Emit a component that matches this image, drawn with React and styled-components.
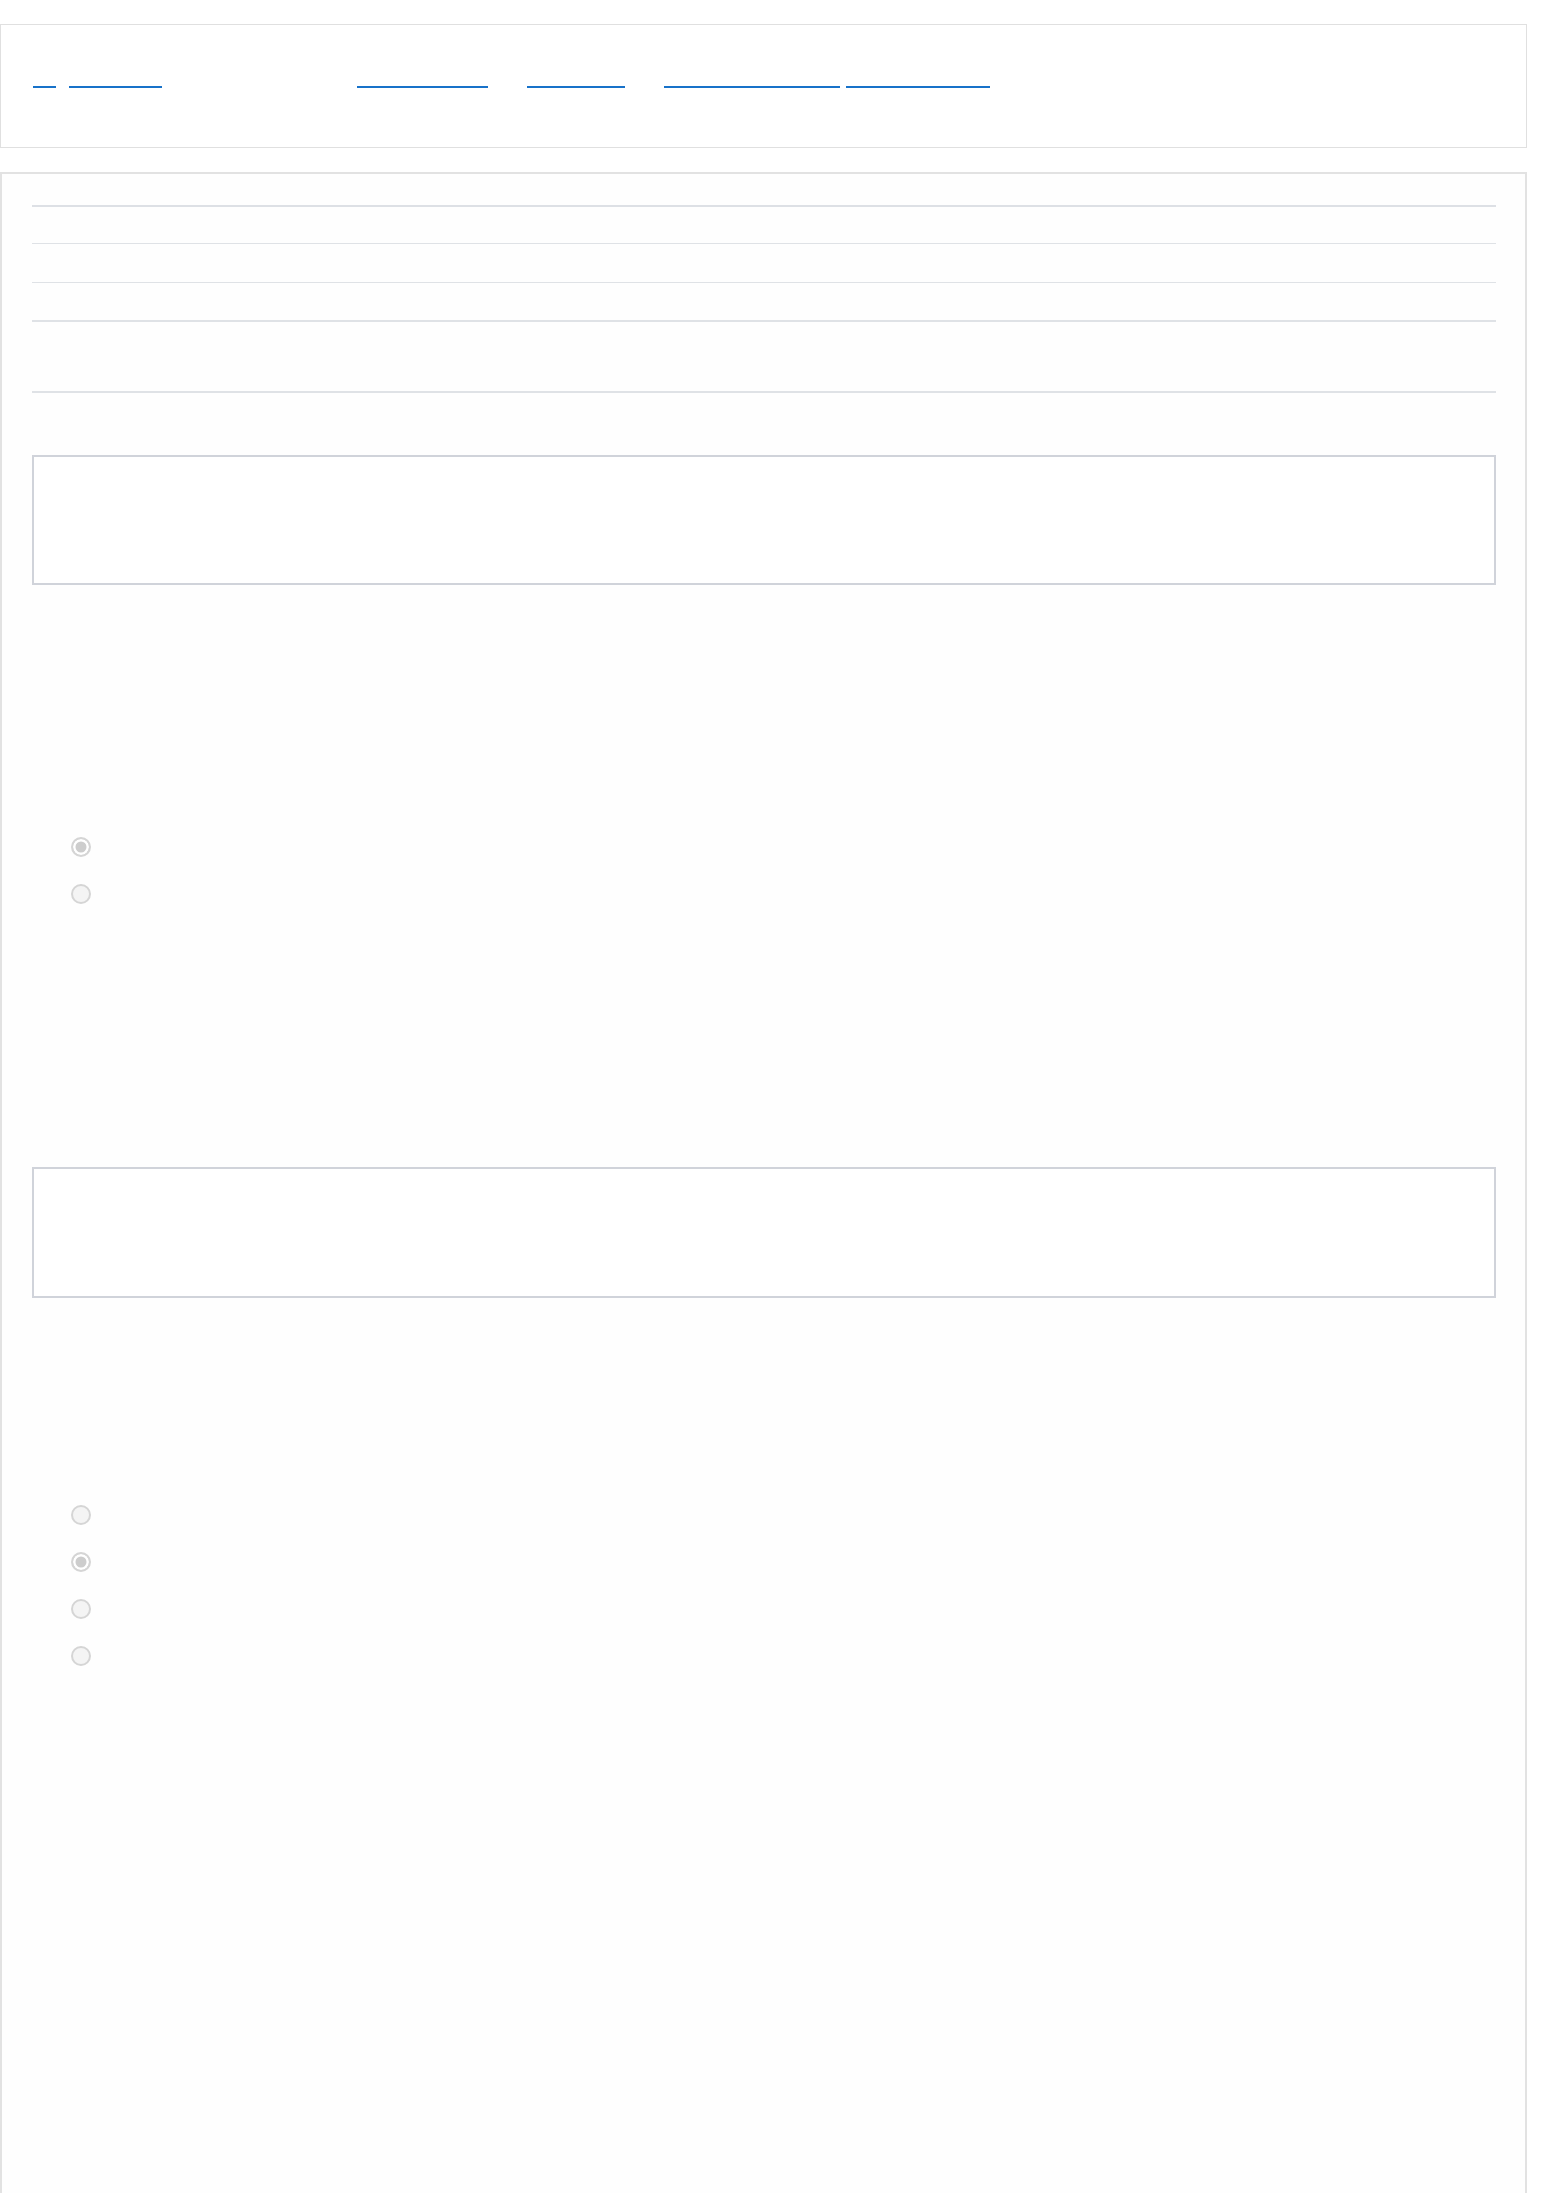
import React from 'react';
import styled, { createGlobalStyle } from 'styled-components';

const GlobalStyle = createGlobalStyle`
  html, body {
    margin: 0;
    padding: 0;
    background: #ffffff;
    font-family: "Liberation Sans", Arial, sans-serif;
  }
`;

const Page = styled.div`
  width: 1527px;
  padding-top: 24px;
`;

const Header = styled.header`
  box-sizing: border-box;
  height: 124px;
  border: 1px solid #e0e0e0;
  background: #ffffff;
  display: flex;
  align-items: flex-start;
  padding: 43px 0 0 32px;
`;

const NavLink = styled.a`
  display: inline-block;
  box-sizing: border-box;
  width: ${(p) => p.$width}px;
  height: 20px;
  margin-left: ${(p) => p.$gap || 0}px;
  border-bottom: 2px solid #1872c9;
  color: transparent;
  font-size: 14px;
  line-height: 18px;
  white-space: nowrap;
  text-decoration: none;
`;

const Main = styled.main`
  box-sizing: border-box;
  margin-top: 24px;
  min-height: 2060px;
  border: 2px solid #e2e2e2;
  background: #fefefe;
  padding: 31px 29px 40px 30px;
`;

const DetailList = styled.dl`
  margin: 0;
  border-top: 2px solid #dde0e5;
`;

const DetailRow = styled.div`
  box-sizing: content-box;
  height: ${(p) => p.$height}px;
  border-bottom: ${(p) => (p.$thick ? 2 : 1)}px solid #dfe2e6;
  color: transparent;
  font-size: 14px;
  display: flex;
  align-items: center;
`;

const AnswerBox = styled.div`
  box-sizing: border-box;
  margin-top: ${(p) => p.$top}px;
  height: ${(p) => p.$height}px;
  border: 2px solid #d0d3da;
  background: #ffffff;
`;

const OptionList = styled.div`
  margin-top: ${(p) => p.$top}px;
  padding-left: 39px;
`;

const Option = styled.label`
  height: 47px;
  display: flex;
  align-items: center;
  gap: 12px;
  color: transparent;
  font-size: 14px;
`;

const Radio = styled.input.attrs({ type: 'radio', disabled: true })`
  appearance: none;
  -webkit-appearance: none;
  box-sizing: border-box;
  margin: 0;
  width: 20px;
  height: 20px;
  border-radius: 50%;
  border: 2px solid #d5d5d5;
  background: #f4f4f4;

  &:checked {
    background: #cdcdcd;
    box-shadow: inset 0 0 0 2.5px #ffffff;
  }
`;

const rows = [
  { label: 'Name', height: 36 },
  { label: 'Course', height: 38 },
  { label: 'Started', height: 37, thick: true },
  { label: 'Grade', height: 69, thick: true },
];

function App() {
  return (
    <>
      <GlobalStyle />
      <Page>
        <Header>
          <NavLink href="#" $width={23}>⌂</NavLink>
          <NavLink href="#" $width={93} $gap={13}>Portal</NavLink>
          <NavLink href="#" $width={131} $gap={195}>Dashboard</NavLink>
          <NavLink href="#" $width={98} $gap={39}>Courses</NavLink>
          <NavLink href="#" $width={176} $gap={39}>Account settings</NavLink>
          <NavLink href="#" $width={144} $gap={6}>Log out</NavLink>
        </Header>
        <Main>
          <DetailList>
            {rows.map((r) => (
              <DetailRow key={r.label} $height={r.height} $thick={r.thick}>
                {r.label}
              </DetailRow>
            ))}
          </DetailList>

          <AnswerBox $top={62} $height={130} />

          <OptionList $top={238}>
            <Option>
              <Radio name="q1" defaultChecked />
              True
            </Option>
            <Option>
              <Radio name="q1" />
              False
            </Option>
          </OptionList>

          <AnswerBox $top={250} $height={131} />

          <OptionList $top={193}>
            <Option>
              <Radio name="q2" />
              Option A
            </Option>
            <Option>
              <Radio name="q2" defaultChecked />
              Option B
            </Option>
            <Option>
              <Radio name="q2" />
              Option C
            </Option>
            <Option>
              <Radio name="q2" />
              Option D
            </Option>
          </OptionList>
        </Main>
      </Page>
    </>
  );
}

export default App;
